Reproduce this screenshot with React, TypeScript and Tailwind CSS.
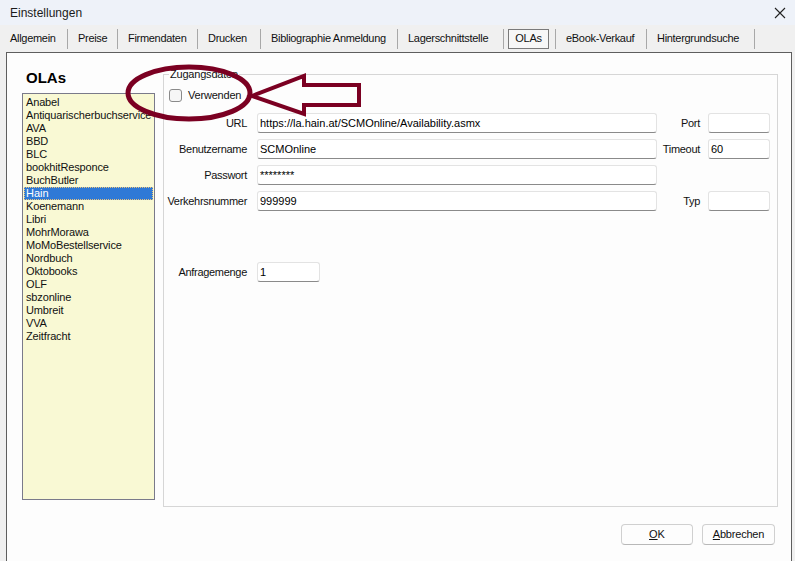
import React from "react";

const items = [
  "Anabel",
  "Antiquarischerbuchservice",
  "AVA",
  "BBD",
  "BLC",
  "bookhitResponce",
  "BuchButler",
  "Hain",
  "Koenemann",
  "Libri",
  "MohrMorawa",
  "MoMoBestellservice",
  "Nordbuch",
  "Oktobooks",
  "OLF",
  "sbzonline",
  "Umbreit",
  "VVA",
  "Zeitfracht",
];

const tabs: { label: string; w: number }[] = [
  { label: "Allgemein", w: 68 },
  { label: "Preise", w: 50 },
  { label: "Firmendaten", w: 80 },
  { label: "Drucken", w: 63 },
  { label: "Bibliographie Anmeldung", w: 137 },
  { label: "Lagerschnittstelle", w: 106 },
  { label: "OLAs", w: 52 },
  { label: "eBook-Verkauf", w: 91 },
  { label: "Hintergrundsuche", w: 108 },
];

function Input({ w, value }: { w: string; value?: string }) {
  return (
    <div
      className={`${w} h-[20px] bg-white border border-[#e3e3e3] border-b-[#8a8a8a] rounded-[3px] pl-[2px] flex items-center text-[11px] text-black`}
    >
      {value}
    </div>
  );
}

export default function App() {
  return (
    <div
      className="relative w-[795px] h-[561px] overflow-hidden bg-[#f0f0f0] flex flex-col text-[#111]"
      style={{ fontFamily: '"Liberation Sans", Arial, sans-serif' }}
    >
      {/* Title bar */}
      <div className="h-[25px] bg-[#eef2f9] flex items-center justify-between pl-[10px] pr-[8px] shrink-0">
        <span className="text-[12px] text-[#1a1a1a]">Einstellungen</span>
        <svg width="12" height="12" viewBox="0 0 12 12" className="mr-[1px]">
          <path d="M1 1 L11 11 M11 1 L1 11" stroke="#222" strokeWidth="1.1" />
        </svg>
      </div>

      {/* Tabs */}
      <div className="h-[27px] flex items-center shrink-0">
        {tabs.map((t) => (
          <div
            key={t.label}
            className="h-[20px] border-r border-[#a8a8a8] flex items-center shrink-0"
            style={{ width: t.w }}
          >
            {t.label === "OLAs" ? (
              <div className="ml-[4px] w-[41px] h-[20px] border border-[#7a7a7a] bg-[#f7f7f7] flex items-center justify-center text-[11px] tracking-[-0.2px]">
                OLAs
              </div>
            ) : (
              <span className="pl-[10px] text-[11px] tracking-[-0.3px] whitespace-nowrap">
                {t.label}
              </span>
            )}
          </div>
        ))}
      </div>

      {/* Panel */}
      <div className="flex-1 ml-[6px] mr-[3px] bg-[#fdfdfd] border-l border-t border-r border-[#5e5e5e] flex flex-col">
        <div className="h-[454px] flex items-start shrink-0">
          {/* Left column */}
          <div className="ml-[15px] w-[133px] flex flex-col pt-[16px]">
            <div className="h-[18px] pl-[4px] text-[15px] font-bold leading-[18px] text-black">
              OLAs
            </div>
            <div className="mt-[6px] h-[407px] bg-[#f9f9d4] border border-[#7a7a8a] pt-[2px] px-[1px]">
              {items.map((it) =>
                it === "Hain" ? (
                  <div
                    key={it}
                    className="h-[13px] leading-[11px] bg-[#2f79d6] text-white pl-[1px] text-[11px] border border-dotted border-[#e9c27a]"
                  >
                    {it}
                  </div>
                ) : (
                  <div
                    key={it}
                    className="h-[13px] leading-[13px] pl-[2px] text-[11px] tracking-[-0.15px] text-[#111] whitespace-nowrap"
                  >
                    {it}
                  </div>
                )
              )}
            </div>
          </div>

          {/* Group box */}
          <div className="relative ml-[8px] mt-[21px] w-[615px] h-[433px] border border-[#d6d6d6] flex flex-col">
            <span className="absolute -top-[7px] left-[5px] bg-[#fdfdfd] px-[1px] text-[11px] leading-[13px] tracking-[-0.2px]">
              Zugangsdaten
            </span>

            <div className="mt-[14px] ml-[5px] flex items-center h-[13px]">
              <div className="w-[13px] h-[13px] rounded-[3px] border border-[#8a8a8a] bg-[#f6f6f6]" />
              <span className="ml-[6px] text-[11px] tracking-[-0.2px]">Verwenden</span>
            </div>

            <div className="mt-[11px] flex flex-col gap-[6px]">
              {[
                { l: "URL", v: "https://la.hain.at/SCMOnline/Availability.asmx", r: "Port", rv: "" },
                { l: "Benutzername", v: "SCMOnline", r: "Timeout", rv: "60" },
                { l: "Passwort", v: "********", r: null, rv: "" },
                { l: "Verkehrsnummer", v: "999999", r: "Typ", rv: "" },
              ].map((row) => (
                <div key={row.l} className="flex items-center h-[20px]">
                  <div className="w-[83px] text-right text-[11px] tracking-[-0.3px] whitespace-nowrap">
                    {row.l}
                  </div>
                  <div className="ml-[10px]">
                    <Input w="w-[400px]" value={row.v} />
                  </div>
                  {row.r !== null && (
                    <>
                      <div className="w-[43px] text-right text-[11px] tracking-[-0.3px]">
                        {row.r}
                      </div>
                      <div className="ml-[8px]">
                        <Input w="w-[62px]" value={row.rv} />
                      </div>
                    </>
                  )}
                </div>
              ))}
            </div>

            <div className="mt-[51px] flex items-center h-[20px]">
              <div className="w-[83px] text-right text-[11px] tracking-[-0.3px]">Anfragemenge</div>
              <div className="ml-[10px]">
                <Input w="w-[63px]" value="1" />
              </div>
            </div>
          </div>
        </div>

        {/* Buttons */}
        <div className="mt-[17px] flex justify-end gap-[9px] pr-[16px]">
          <div className="w-[72px] h-[21px] rounded-[4px] border border-[#d0d0d0] border-b-[#b8b8b8] bg-[#fdfdfd] flex items-center justify-center text-[11px]">
            <span>
              <span className="underline">O</span>K
            </span>
          </div>
          <div className="w-[73px] h-[21px] rounded-[4px] border border-[#d0d0d0] border-b-[#b8b8b8] bg-[#fdfdfd] flex items-center justify-center text-[11px] tracking-[-0.2px]">
            <span>
              <span className="underline">A</span>bbrechen
            </span>
          </div>
        </div>
      </div>

      {/* Annotation overlay */}
      <svg
        className="absolute left-0 top-0 pointer-events-none"
        width="795"
        height="561"
        viewBox="0 0 795 561"
      >
        <ellipse cx="189" cy="93" rx="61" ry="26" fill="none" stroke="#7b0022" strokeWidth="5" />
        <polygon
          points="252,96 304,76 304,85 359,85 359,105 304,105 304,114"
          fill="none"
          stroke="#7b0022"
          strokeWidth="4"
          strokeLinejoin="miter"
        />
      </svg>
    </div>
  );
}
